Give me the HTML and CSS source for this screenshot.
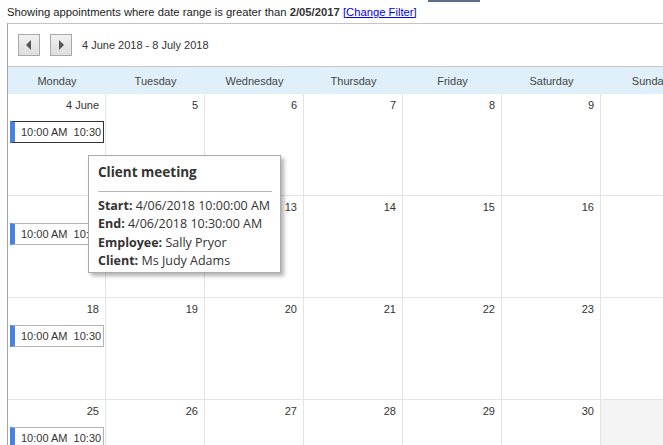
FILE: index.html
```html
<!DOCTYPE html>
<html lang="en">
<head>
    <meta charset="UTF-8">
    <title>Appointments</title>
    <link rel="stylesheet" href="styles.css">
</head>
<body>
    <div class="topstrip"><span class="stub"></span></div>
    <div class="filter">
        Showing appointments where date range is greater than <b>2/05/2017</b> <a href="#">[Change Filter]</a>
    </div>

    <div class="calendar">
        <div class="toolbar">
            <button class="nav"><svg width="8" height="10" viewBox="0 0 8 10"><path d="M6 0 L1 5 L6 10 Z" fill="#555"/></svg></button>
            <button class="nav"><svg width="8" height="10" viewBox="0 0 8 10"><path d="M2 0 L7 5 L2 10 Z" fill="#555"/></svg></button>
            <span class="range">4 June 2018 - 8 July 2018</span>
        </div>

        <div class="week head">
            <div>Monday</div><div>Tuesday</div><div>Wednesday</div><div>Thursday</div><div>Friday</div><div>Saturday</div><div>Sunday</div>
        </div>

        <div class="week">
            <div class="day"><div class="num">4 June</div><div class="appt selected">10:00 AM  10:30 AM Client meeting</div></div>
            <div class="day"><div class="num">5</div></div>
            <div class="day"><div class="num">6</div></div>
            <div class="day"><div class="num">7</div></div>
            <div class="day"><div class="num">8</div></div>
            <div class="day"><div class="num">9</div></div>
            <div class="day"><div class="num">10</div></div>
        </div>
        <div class="week">
            <div class="day"><div class="num">11</div><div class="appt">10:00 AM  10:30 AM Client meeting</div></div>
            <div class="day"><div class="num">12</div></div>
            <div class="day"><div class="num">13</div></div>
            <div class="day"><div class="num">14</div></div>
            <div class="day"><div class="num">15</div></div>
            <div class="day"><div class="num">16</div></div>
            <div class="day"><div class="num">17</div></div>
        </div>
        <div class="week">
            <div class="day"><div class="num">18</div><div class="appt">10:00 AM  10:30 AM Client meeting</div></div>
            <div class="day"><div class="num">19</div></div>
            <div class="day"><div class="num">20</div></div>
            <div class="day"><div class="num">21</div></div>
            <div class="day"><div class="num">22</div></div>
            <div class="day"><div class="num">23</div></div>
            <div class="day"><div class="num">24</div></div>
        </div>
        <div class="week">
            <div class="day"><div class="num">25</div><div class="appt">10:00 AM  10:30 AM Client meeting</div></div>
            <div class="day"><div class="num">26</div></div>
            <div class="day"><div class="num">27</div></div>
            <div class="day"><div class="num">28</div></div>
            <div class="day"><div class="num">29</div></div>
            <div class="day"><div class="num">30</div></div>
            <div class="day other"></div>
        </div>

        <div class="tooltip">
            <div class="tip-title">Client meeting</div>
            <div class="tip-body">
                <div><b>Start:</b> 4/06/2018 10:00:00 AM</div>
                <div><b>End:</b> 4/06/2018 10:30:00 AM</div>
                <div><b>Employee:</b> Sally Pryor</div>
                <div><b>Client:</b> Ms Judy Adams</div>
            </div>
        </div>
    </div>
</body>
</html>
```

FILE: styles.css
```css
html, body {
    margin: 0;
    overflow: hidden;
    background: #fff;
}
body {
    font-family: "Liberation Sans", Tahoma, sans-serif;
    font-size: 11px;
    color: #333;
}
.topstrip {
    height: 3px;
    position: relative;
}
.stub {
    position: absolute;
    left: 428px;
    top: 0;
    width: 52px;
    height: 2px;
    background: #5b6d8c;
}
.filter {
    padding: 1px 7px 0;
    height: 19px;
    line-height: 16px;
    font-size: 11.25px;
    color: #222;
    white-space: nowrap;
}
.filter b { color: #333; }
.filter a { color: #0000ee; }

.calendar {
    position: relative;
    margin-left: 7px;
    width: 720px;
    border-left: 1px solid #a5a5a5;
    border-top: 1px solid #c3c3c3;
}
.toolbar {
    height: 42px;
    display: flex;
    align-items: center;
    padding-left: 10px;
    gap: 10px;
}
.nav {
    width: 22px;
    height: 22px;
    padding: 0;
    border: 1px solid #a9a9a9;
    background: linear-gradient(#f0f0f0, #dedede);
    display: flex;
    align-items: center;
    justify-content: center;
}
.range {
    color: #333;
}
.week {
    display: grid;
    grid-template-columns: 98px repeat(6, 99px);
}
.head {
    height: 27px;
    background: #e0f0fa;
    border-top: 1px solid #c8c8c8;
}
.head div {
    display: flex;
    align-items: center;
    justify-content: center;
    color: #444;
}
.day {
    height: 101px;
    border-right: 1px solid #e3e3e3;
    border-bottom: 1px solid #e3e3e3;
    overflow: hidden;
}
.other { background: #f4f4f4; }
.num {
    text-align: right;
    padding: 5px 6px 0 0;
    height: 22px;
    line-height: 13px;
}
.appt {
    margin: 0 1px 0 2px;
    height: 20px;
    line-height: 20px;
    border: 1px solid #b4b4b4;
    border-left: 5px solid #4a82e0;
    padding-left: 6px;
    white-space: pre;
    overflow: hidden;
    color: #333;
}
.appt.selected {
    border-top-color: #333;
    border-right-color: #333;
    border-bottom-color: #333;
}

.tooltip {
    position: absolute;
    left: 80px;
    top: 131px;
    width: 174px;
    height: 104px;
    padding: 6px 8px 6px 9px;
    background: #fff;
    border: 1px solid #ababab;
    box-shadow: 3px 3px 4px rgba(0, 0, 0, 0.3);
    font-family: "Open Sans", "Noto Sans", sans-serif;
    font-size: 12.5px;
    color: #333;
}
.tip-title {
    font-weight: bold;
    font-size: 13.5px;
    line-height: 20px;
    padding-bottom: 9px;
    border-bottom: 1px solid #b5b5b5;
    margin-bottom: 5px;
}
.tip-body div {
    line-height: 18.3px;
    white-space: nowrap;
}
```
